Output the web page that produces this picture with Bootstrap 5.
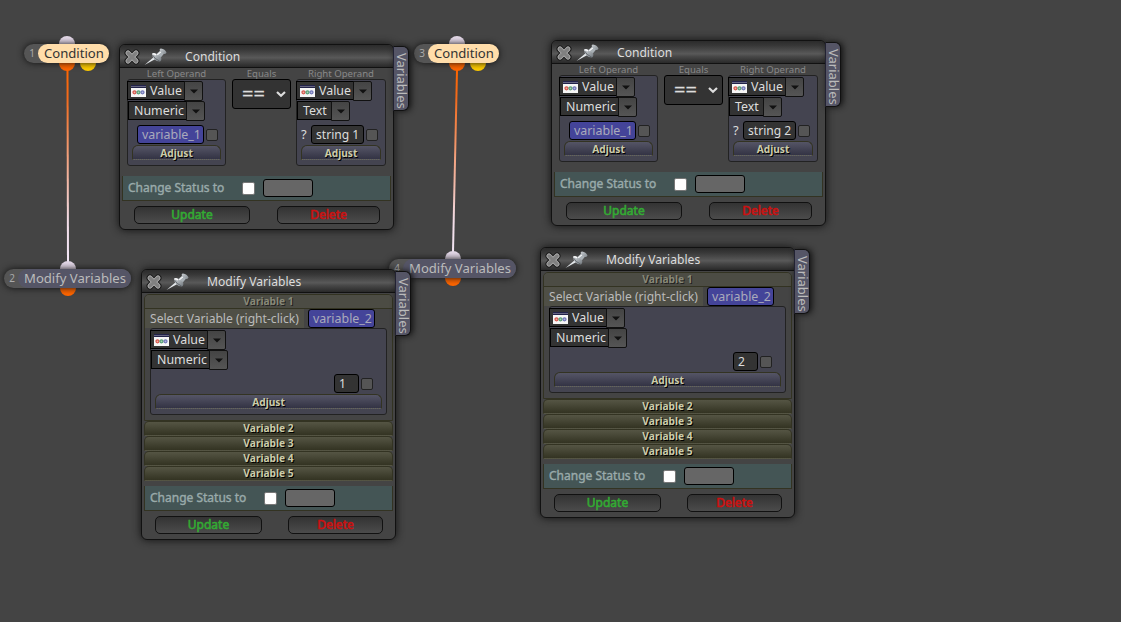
<!DOCTYPE html>
<html lang="en">
<head>
<meta charset="utf-8">
<title>Node editor</title>
<link rel="stylesheet" href="https://cdn.jsdelivr.net/npm/bootstrap@5.3.0/dist/css/bootstrap.min.css">
<style>
body{background:#444;font-family:"Noto Sans",sans-serif;font-size:12px;line-height:1;color:#ddd;overflow:hidden}
.canvas{width:1121px;height:622px}
.canvas svg{display:block}
/* graph nodes */
.node{height:19px;border-radius:10px;background:#555;box-shadow:0 0 7px #111;font-size:13.1px;line-height:19px;white-space:nowrap}
.node-id{width:14px;font-size:10px;color:#aaa;text-align:center;padding-left:2px}
.node-name{border-radius:10px;padding-left:6px;background:#556;color:#bbb;flex:1}
.node.cond .node-name{background:#fda;color:#333}
.port{width:16px;height:16px;border-radius:50%;z-index:-1}
.layer{z-index:0}
.port-in{background:#e6daea;top:-8px}
.port-out{background:#f60;top:11px}
.port-alt{background:#fc0;top:11px}
/* windows */
.win{background:#444;border:1px solid #111;border-radius:6px;box-shadow:0 0 8px #111}
.win-head{height:23px;border-bottom:1px solid #111;border-radius:5px 5px 0 0;background:linear-gradient(#2b2b2b,#373737 20%,#595959 58%,#484848 70%,#292929);font-size:12.1px;line-height:22px;padding-left:4px}
.head-icon{margin-top:2px}
.win-title{margin-left:17px;padding-top:1px}
.tab{left:100%;top:1px;width:16px;height:65px;border:1px solid #111;border-left-color:#223;border-radius:0 6px 6px 0;background:#556;box-shadow:2px 0 6px #111;writing-mode:vertical-rl;font-size:13px;line-height:12px;padding-top:6px;color:#bbb}
.cap{height:11px;font-size:9.6px;line-height:12px;color:#888;text-align:center;white-space:nowrap}
.opbox{background:#444450;border:1px solid #222;border-radius:3px;padding-top:1px}
.combo{height:20px;margin-left:-1px}
.combo + .combo{margin-left:0}
.combo-main{height:19px;background:#333;border:1px solid #000;color:#ddd;font-size:12.4px;line-height:18px;padding:0 4px 0 5px;white-space:nowrap}
.combo-main span{padding-top:1px}
.combo-icon{padding-left:3px}
.combo-arrow{width:19px;height:20px;background:linear-gradient(#444,#555);border:1px solid #111;border-radius:0 2px 2px 0;margin-left:-1px}
.field{height:19px;border:1px solid #000;border-radius:3px;background:#333;color:#ddd;font-size:12.1px;line-height:18px;white-space:nowrap;padding:0 4px}
.field.var{background:#449;color:#aab;font-size:12.4px}
.tick{width:12px;height:12px;background:#555;border:1px solid #222;border-radius:2px}
.adjust,.acc,.acchead{color:#cca;font-weight:700;font-size:10.2px;text-align:center;text-shadow:1px 1px #000}
.adjust{height:15px;margin:1px 4px 3px;border:1px solid #332;border-bottom:1px dotted #665;border-radius:6px 6px 0 0;background:linear-gradient(#556,#334);line-height:15px}
.eq{width:59px;height:30px;border:1px solid #000;border-radius:3px;background:#333}
.eq-sign{font-size:20px;-webkit-text-stroke:.3px #ddd}
.statusbar{height:25px;margin:0 2px;background:#455;border:1px solid #332;border-top:0;font-size:12px;color:#9aa;padding-left:5px;-webkit-text-stroke:.4px #9aa}
.chk{width:13px;height:13px;background:#fff;border:1px solid #777;border-radius:2px}
.stfield{width:50px;height:18px;background:#666;border:1px solid #000;border-radius:3px}
.act{height:18px;border:1px solid #111;border-radius:5px;background:linear-gradient(#333,#4b4b4b);font-size:12px;line-height:16px;text-align:center;-webkit-text-stroke:.6px}
.up{color:#3a3}.del{color:#c11}
.acc{height:15px;margin:0 2px;border:1px solid #332;border-bottom:1px dotted #554;border-radius:5px 5px 0 0;background:linear-gradient(#554,#332);line-height:13px}
.accbody{height:127px;margin:1px 2px 0;border:1px solid #332;border-radius:5px 5px 0 0}
.acchead{height:14px;background:#4c4c44;border-bottom:1px solid #332;border-radius:4px 4px 0 0;color:#887;line-height:13px;text-shadow:1px 1px #222}
.selrow{height:19px;color:#bbb}
.sellabel{width:159px;height:19px;background:#4f4f46;font-size:12.1px;line-height:20px;padding-left:5px;white-space:nowrap}
.modbox{width:237px;height:87px;margin-left:5px}
</style>
</head>
<body>
<svg width="0" height="0" class="position-absolute">
<defs>
<linearGradient id="metal" x1="0" y1="0" x2="1" y2="1"><stop offset="0" stop-color="#f4f6f8"/><stop offset=".5" stop-color="#a3a9ae"/><stop offset="1" stop-color="#555b60"/></linearGradient>
<linearGradient id="wireA" gradientUnits="userSpaceOnUse" x1="0" y1="70" x2="0" y2="260"><stop offset="0" stop-color="#f60"/><stop offset=".15" stop-color="#f26a1c"/><stop offset=".8" stop-color="#f2dde8"/><stop offset="1" stop-color="#f2e6f6"/></linearGradient>
<symbol id="close" viewBox="0 0 16 16"><g stroke-linecap="round"><path d="M4 4 12 12M12 4 4 12" stroke="#1c1c1c" stroke-width="7"/><path d="M4 4 12 12M12 4 4 12" stroke="#b0b0b0" stroke-width="5"/><path d="M4 4 12 12M12 4 4 12" stroke="#808080" stroke-width="3.200"/></g></symbol>
<symbol id="pin" viewBox="0 0 24 20"><path d="M.5 18 10.500 9.500 12.300 11.500Z" fill="#e4e8eb"/><path d="M8 6.500Q10.500 5.500 12.500 7L16 4Q15 1.800 17 1.500Q21 2 22.500 5.500Q22 7.500 19.800 6.800L17 10Q18 13 16 14.500Q12.500 14.500 10 12Q8 9.500 8 6.500Z" fill="url(#metal)"/><path d="M12.500 7 16 4 19.800 6.800 17 10Z" fill="#a9b0b5"/><path d="M13.300 7.800 16.800 4.800M8.600 7Q10.500 6.500 12 8" stroke="#fff" stroke-width="1.100" fill="none"/><path d="M8.500 8Q10.500 12 15.500 14" stroke="#555b60" stroke-width=".8" fill="none"/></symbol>
<symbol id="val" viewBox="0 0 15 12"><path fill="#f6f6f6" d="M0 0H15V12H0z"/><path fill="#22224a" d="M0 0H15V3H0z"/><path fill="#aab" d="M0 1H15V1.500H0z"/><g stroke-width="1.300"><circle cx="3.500" cy="7.300" r="1.500" stroke="#d65a50" fill="#f0b0a8"/><circle cx="7.500" cy="7.300" r="1.500" stroke="#59a078" fill="#a8d0b8"/><circle cx="11.500" cy="7.300" r="1.500" stroke="#7278b8" fill="#b4b8e0"/></g></symbol>
<symbol id="down" viewBox="0 0 8 5"><path d="M0 .5H8L4 4.500Z" fill="#111"/></symbol>
<symbol id="chev" viewBox="0 0 12 8"><path d="M2 2 6 5.800 10 2" fill="none" stroke="#ddd" stroke-width="2.200"/></symbol>
</defs></svg>

<main class="canvas position-relative" id="canvas">
  <svg class="position-absolute" width="520" height="300" stroke-width="2"><path d="M67.500 70 68 262" stroke="url(#wireA)"/><path d="M457 70 453 252" stroke="url(#wireA)"/></svg>
</main>

<script src="https://cdn.jsdelivr.net/npm/bootstrap@5.3.0/dist/js/bootstrap.bundle.min.js"></script>
<script>
const icon = (id, w, h, cls = '') => `<svg class="flex-shrink-0 ${cls}" width="${w}" height="${h}"><use href="#${id}"/></svg>`;
const port = (kind, x) => `<i class="port port-${kind} position-absolute" style="left:${x - 8}px"></i>`;
const combo = (label, w, hasIcon) => `<div class="combo d-flex"><div class="combo-main d-flex align-items-center ${hasIcon ? 'combo-icon' : ''}" style="width:${w}px">${hasIcon ? icon('val', 15, 12, 'me-1') : ''}<span>${label}</span></div><div class="combo-arrow d-flex align-items-center justify-content-center">${icon('down', 8, 5)}</div></div>`;

const node = n => `<div class="layer position-absolute" style="left:${n.x}px;top:${n.y}px;width:${n.w}px">
  <div class="node d-flex ${n.cond ? 'cond' : ''}"><span class="node-id">${n.id}</span><span class="node-name">${n.cond ? 'Condition' : 'Modify Variables'}</span></div>
  ${port('in', n.p)}${port('out', n.p)}${n.cond ? port('alt', n.p + 21) : ''}</div>`;

const frame = (w, title, body) => `<section class="win position-absolute" style="left:${w.x}px;top:${w.y}px;width:${w.w}px;height:${w.h}px">
  <div class="win-head d-flex align-items-center">${icon('close', 16, 16, 'head-icon')}${icon('pin', 24, 20, 'head-icon ms-1')}<span class="win-title">${title}</span></div>
  <div class="tab position-absolute">Variables</div>${body}</section>`;

const footer = (left, gap, uw, dw) => `<div class="statusbar d-flex align-items-center"><span style="width:114px">Change Status to</span><i class="chk"></i><i class="stfield" style="margin-left:8px"></i></div>
  <div class="d-flex" style="padding:5px 0 0 ${left}px;gap:${gap}px"><div class="act up" style="width:${uw}px">Update</div><div class="act del" style="width:${dw}px">Delete</div></div>`;

const condition = w => frame(w, 'Condition', `
  <div class="d-flex" style="padding-left:7px;height:108px">
    <div style="width:99px"><div class="cap">Left Operand</div><div class="opbox" style="height:87px">
      ${combo('Value', 58, true)}${combo('Numeric', 59)}
      <div class="d-flex align-items-center" style="padding:4px 0 0 9px;gap:2px"><span class="field var" style="width:67px">variable_1</span><i class="tick"></i></div>
      <div class="adjust">Adjust</div></div></div>
    <div style="margin-left:6px"><div class="cap">Equals</div><div class="eq d-flex align-items-center justify-content-between" style="padding:0 3px 0 9px"><span class="eq-sign">==</span>${icon('chev', 12, 8)}</div></div>
    <div style="width:90px;margin-left:5px"><div class="cap">Right Operand</div><div class="opbox" style="height:87px">
      ${combo('Value', 58, true)}${combo('Text', 35)}
      <div class="d-flex align-items-center" style="padding:4px 0 0 4px;gap:2px"><span style="width:8px;font-size:13px">?</span><span class="field" style="width:53px">${w.text}</span><i class="tick"></i></div>
      <div class="adjust">Adjust</div></div></div>
  </div>${footer(14, 27, 116, 103)}`);

const modify = w => frame(w, 'Modify Variables', `
  <div class="accbody"><div class="acchead">Variable 1</div>
    <div class="selrow d-flex"><span class="sellabel">Select Variable (right-click)</span><span class="field var" style="width:67px;margin-left:4px">variable_2</span></div>
    <div class="opbox modbox">${combo('Value', 58, true)}${combo('Numeric', 59)}
      <div class="d-flex align-items-center" style="padding:4px 0 0 183px;gap:2px"><span class="field" style="width:25px">${w.text}</span><i class="tick"></i></div>
      <div class="adjust">Adjust</div></div>
  </div>
  ${[2, 3, 4, 5].map(i => `<div class="acc">Variable ${i}</div>`).join('')}
  <div style="height:5px"></div>${footer(13, 26, 107, 95)}`);

document.getElementById('canvas').insertAdjacentHTML('beforeend', [
  node({x: 24, y: 44, w: 85, id: 1, cond: true, p: 43}),
  node({x: 4, y: 269, w: 127, id: 2, p: 64}),
  node({x: 414, y: 44, w: 85, id: 3, cond: true, p: 43}),
  node({x: 389, y: 259, w: 127, id: 4, p: 64}),
  condition({x: 119, y: 44, w: 275, h: 186, text: 'string 1'}),
  condition({x: 551, y: 40, w: 275, h: 186, text: 'string 2'}),
  modify({x: 141, y: 269, w: 255, h: 271, text: '1'}),
  modify({x: 540, y: 247, w: 255, h: 271, text: '2'})
].join(''));
</script>
</body>
</html>
